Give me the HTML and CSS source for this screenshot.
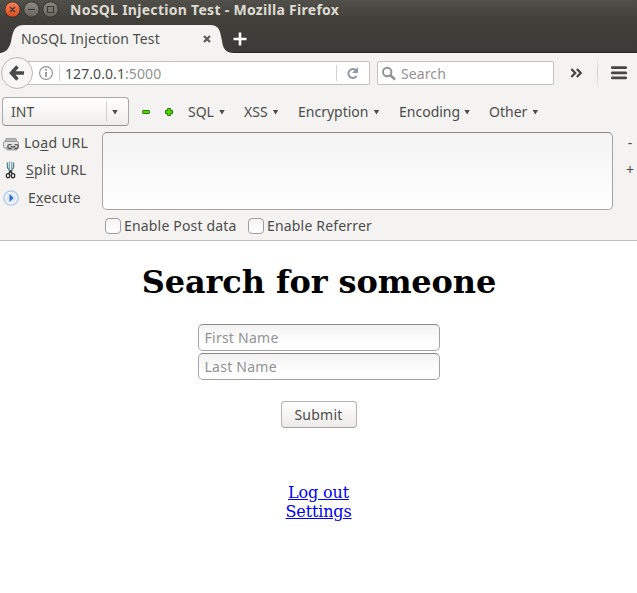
FILE: index.html
```html
<!DOCTYPE html>
<html lang="en">
<head>
<meta charset="utf-8">
<title>NoSQL Injection Test</title>
<link rel="stylesheet" href="styles.css">
</head>
<body>
<header class="titlebar">
  <svg class="window-buttons" width="64" height="20" viewBox="0 0 64 20">
    <defs>
      <linearGradient id="close" x1="0" y1="0" x2="0" y2="1"><stop offset="0" stop-color="#f58059"/><stop offset="1" stop-color="#df4b1b"/></linearGradient>
      <linearGradient id="grey" x1="0" y1="0" x2="0" y2="1"><stop offset="0" stop-color="#8d8b83"/><stop offset="1" stop-color="#65645d"/></linearGradient>
    </defs>
    <g stroke="#30302c"><circle cx="12.5" cy="9.5" r="7.7" fill="url(#close)"/><circle cx="31.5" cy="9.5" r="7.7" fill="url(#grey)"/><circle cx="50.5" cy="9.5" r="7.7" fill="url(#grey)"/></g>
    <g fill="none" stroke="#3a3935" stroke-width="1.2"><path d="M10 7l5 5M15 7l-5 5M28 9.5h7M47.5 6.5h6v6h-6z"/></g>
  </svg>
  <span class="window-title">NoSQL Injection Test - Mozilla Firefox</span>
</header>
<nav class="tabs">
  <div class="tab">
    <svg class="tab-shape" width="236" height="30" viewBox="0 0 236 30"><path d="M0 29C7 28 9 24 11 18C13 6 15 1 24 1H210C219 1 220 6 222 17C223 25 226 29 234 29V30H0Z" fill="#f4f3f1"/></svg>
    <span class="tab-title">NoSQL Injection Test</span>
    <svg class="tab-close" width="8" height="8" viewBox="0 0 8 8"><path d="M1 1l6 6M7 1L1 7" stroke="#5c5b58" stroke-width="2.2"/></svg>
  </div>
  <svg class="new-tab" width="14" height="14" viewBox="0 0 14 14"><path d="M7 .5v13M.5 7h13" stroke="#fff" stroke-width="2.6"/></svg>
</nav>
<div class="navbar">
  <svg class="back" width="34" height="34" viewBox="0 0 34 34"><circle cx="17" cy="17" r="15.5" fill="#f8f7f6" stroke="#bbb9b6"/><path d="M17.500 10.500L11.500 17l6 6.500M12 17h12" fill="none" stroke="#4b4b4b" stroke-width="3.500"/></svg>
  <div class="address">
    <svg width="16" height="16" viewBox="0 0 16 16"><circle cx="8" cy="8" r="6.4" fill="none" stroke="#8e8e8e" stroke-width="1.1"/><path d="M8 3.7v2M8 7v5" stroke="#8e8e8e" stroke-width="1.7"/></svg>
    <i class="rule"></i>
    <span class="url">127.0.0.1<span class="port">:5000</span></span>
    <i class="rule reload-rule"></i>
    <svg class="reload" width="13" height="13" viewBox="0 0 13 13"><path d="M10.5 9.2A4.5 4.5 0 1 1 9.7 3" fill="none" stroke="#8d99a6" stroke-width="2"/><path d="M12 0v6H6z" fill="#8d99a6"/></svg>
  </div>
  <div class="search">
    <svg width="16" height="16" viewBox="0 0 16 16"><circle cx="6.2" cy="6" r="4.2" fill="none" stroke="#929292" stroke-width="2"/><path d="M9.2 9l4.8 4.7" stroke="#929292" stroke-width="2.5"/></svg>
    <span>Search</span>
  </div>
  <svg class="overflow" width="13" height="10" viewBox="0 0 13 10"><path d="M1.3 1l4 4-4 4M6.8 1l4 4-4 4" fill="none" stroke="#404040" stroke-width="2.1"/></svg>
  <i class="menu-rule"></i>
  <svg class="menu" width="16" height="14" viewBox="0 0 16 14"><path d="M1.3 1.7h13.4M1.3 6.8h13.4M1.3 11.9h13.4" stroke="#464646" stroke-width="2.8" stroke-linecap="round"/></svg>
</div>
<section class="hackbar">
  <div class="tools">
    <div class="select"><span>INT</span><i class="select-rule"></i><i class="arrow"></i></div>
    <svg class="minus" width="10" height="10" viewBox="0 0 10 10"><rect x="1.5" y="3.5" width="7" height="3" rx=".7" fill="#53d900" stroke="#237600"/></svg>
    <svg class="plus" width="10" height="10" viewBox="0 0 10 10"><path d="M3.5 1.5h3v2h2v3h-2v2h-3v-2h-2v-3h2z" fill="#53d900" stroke="#237600" stroke-linejoin="round"/></svg>
    <span class="drop sql">SQL<i class="arrow"></i></span>
    <span class="drop xss">XSS<i class="arrow"></i></span>
    <span class="drop encryption">Encryption<i class="arrow"></i></span>
    <span class="drop encoding">Encoding<i class="arrow"></i></span>
    <span class="drop other">Other<i class="arrow"></i></span>
  </div>
  <div class="request">
    <div class="actions">
      <div class="action load">
        <svg width="18" height="18" viewBox="0 0 18 18"><path d="M4 3.500h10l1 4H3z" fill="#b8b8b8" stroke="#a6a6a6"/><rect x="1.500" y="6.500" width="15" height="6.500" rx="1.500" fill="#e4e4e4" stroke="#999"/><path d="M3 13.500h13l-1 2H5z" fill="#aaa"/><path d="M9.500 13.500H7.700a1.900 1.900 0 0 1 0-3.800h1.800M12.500 9.700h1.800a1.900 1.900 0 0 1 0 3.800h-1.800M8.800 11.600h4.400" fill="none" stroke="#555" stroke-width="1.300"/></svg>
        <span>Lo<u>a</u>d URL</span>
      </div>
      <div class="action split">
        <svg width="18" height="20" viewBox="0 0 18 20"><path d="M5.500 2.500v5l2.500 4M11.500 2.500v5l-2.500 4" fill="none" stroke="#4f8091" stroke-width="1.400"/><path d="M7.500 1.500v8M9.600 1.500v8" stroke="#86aab6" stroke-width="1.200"/><path d="M6.500 14l2-3 2 3" fill="none" stroke="#222" stroke-width="1.400"/><g fill="none" stroke="#2d2d2d" stroke-width="1.300"><ellipse cx="6" cy="15.700" rx="1.700" ry="2.100"/><ellipse cx="11" cy="15.700" rx="1.700" ry="2.100"/></g></svg>
        <span><u>S</u>plit URL</span>
      </div>
      <div class="action execute">
        <svg width="18" height="18" viewBox="0 0 18 18"><circle cx="9" cy="9" r="7.2" fill="#dbe8f8" stroke="#b3c9e6" stroke-width="1.3"/><circle cx="9" cy="9" r="5.500" fill="none" stroke="#fff"/><path d="M7.500 5l4 4-4 4z" fill="#286bc1"/></svg>
        <span>E<u>x</u>ecute</span>
      </div>
    </div>
    <textarea class="request-url" aria-label="Request URL"></textarea>
    <div class="resize"><span>-</span><span>+</span></div>
  </div>
  <div class="options">
    <label class="post"><i class="check"></i><span>Enable Post data</span></label>
    <label class="referrer"><i class="check"></i><span>Enable Referrer</span></label>
  </div>
</section>
<main>
  <h1>Search for someone</h1>
  <form>
    <input class="first" placeholder="First Name">
    <input class="last" placeholder="Last Name">
    <button type="button">Submit</button>
  </form>
  <div class="links"><a href="#">Log out</a><a href="#">Settings</a></div>
</main>
</body>
</html>
```
FILE: styles.css
```css
* { box-sizing: border-box; }
body { margin: 0; height: 593px; overflow: hidden; background: #fff; color: #4c4c4c; font: 14px/20px "Noto Sans", sans-serif; }
svg { display: block; flex: none; }
span { white-space: nowrap; }
.titlebar { height: 20px; display: flex; background: linear-gradient(#504f49, #403f3a); }
.window-title { margin-left: 6px; color: #dfdbd2; font-weight: 700; font-size: 14px; letter-spacing: .29px; }
.tabs { height: 33px; display: flex; background: linear-gradient(#403f3a, #3c3b37); border-bottom: 1px solid #292825; }
.tab { position: relative; width: 232px; height: 33px; display: flex; align-items: center; padding: 5px 0 0 21px; }
.tab-shape { position: absolute; left: 0; top: 4px; }
.tab-title, .tab-close { position: relative; }
.tab-title { width: 182px; letter-spacing: .13px; }
.new-tab { margin: 12px 0 0 1px; }
.navbar { height: 40px; display: flex; align-items: center; background: #f4f3f1; }
.back { position: relative; z-index: 1; }
.address { width: 354px; height: 24px; margin-left: -18px; padding-left: 21px; display: flex; align-items: center; border: 1px solid #c4c2bf; border-radius: 2px; background: #fff; }
.rule { width: 1px; height: 16px; margin-left: 5px; background: #d2d2d2; }
.url { margin-left: 5px; width: 271px; padding-top: 1px; letter-spacing: .08px; }
.port { color: #929292; }
.reload-rule { margin-left: 0; }
.reload { margin-left: 9px; }
.search { width: 177px; height: 24px; margin-left: 7px; padding: 1px 0 0 3px; display: flex; align-items: center; gap: 4px; border: 1px solid #c4c2bf; border-radius: 2px; background: #fff; color: #929292; letter-spacing: .1px; }
.overflow { margin-left: 16px; }
.menu-rule { width: 1px; height: 34px; margin-left: 14px; background: linear-gradient(#f4f3f1, #cccac7, #f4f3f1); }
.menu { margin-left: 13px; }
.hackbar { height: 148px; padding: 4px 0 0 2px; background: #f4f3f1; border-bottom: 1px solid #c1bfbc; }
.tools { height: 29px; display: flex; align-items: center; }
.select { width: 127px; height: 29px; padding-left: 8px; display: flex; align-items: center; border: 1px solid #aaa8a5; border-bottom-color: #949290; border-radius: 4px; background: linear-gradient(#fff, #efedeb); }
.select > span { width: 95px; }
.select-rule { width: 1px; height: 19px; background: #d1cfcd; }
.arrow { flex: none; width: 6px; height: 5px; margin: 1px 0 0 5px; background: #4c4c4c; clip-path: polygon(0 0, 100% 0, 50% 100%); }
.minus { margin-left: 12px; }
.plus { margin-left: 13px; }
.drop { display: flex; align-items: center; }
.sql { width: 56px; margin-left: 14px; }
.xss { width: 54px; }
.encryption { width: 101px; }
.encoding { width: 90px; }
.encoding .arrow { margin-left: 4px; }
.request { height: 84px; display: flex; }
.actions { width: 100px; padding-top: 3px; letter-spacing: .24px; }
.action { height: 27.5px; display: flex; align-items: center; }
.load svg { margin-top: 2px; }
.load span { margin-left: 4px; }
.split span { margin-left: 6px; }
.execute span { margin-left: 8px; }
u { text-underline-offset: 2px; text-decoration-thickness: 1px; }
.request-url { width: 511px; height: 78px; margin-top: 6px; border: 1px solid #a5a4a2; border-top-color: #898886; border-radius: 5px; background: linear-gradient(#f3f3f3, #fff); resize: none; }
.resize { width: 12px; margin-left: 11px; padding-top: 7px; text-align: center; font-size: 14px; display: grid; grid-template-rows: 27px 27px; align-content: start; }
.options { height: 31px; display: flex; align-items: center; padding-left: 103px; letter-spacing: .18px; }
.options span { padding-top: 1px; }
.options label { display: flex; align-items: center; }
.check { width: 16px; height: 16px; margin-right: 3px; border: 1px solid #a09e9c; border-radius: 4px; background: linear-gradient(#f5f5f5, #fff); }
.post { width: 143px; }
main { padding: 0 8px; text-align: center; font-family: "DejaVu Serif", serif; }
h1 { margin: 22px 0 23px; padding-left: 1px; color: #000; font: bold 32px/38px "DejaVu Serif", serif; letter-spacing: -.12px; }
form { display: flex; flex-direction: column; align-items: center; }
input, button { font: 14px/20px "Noto Sans", sans-serif; color: #4c4c4c; letter-spacing: .25px; }
input { width: 242px; height: 27px; margin: 0 0 2px; padding: 0 6px; border: 1px solid #a4a3a1; border-top-color: #898886; border-radius: 5px; background: linear-gradient(#f2f2f2, #fff 70%); }
input::placeholder { color: #929292; opacity: 1; }
button { width: 76px; height: 27px; margin-top: 19px; padding: 0; border: 1px solid #b4b2b0; border-bottom-color: #a3a19f; border-radius: 4px; background: linear-gradient(#fff, #edebe9); }
.links { display: flex; flex-direction: column; align-items: center; margin-top: 55px; font-size: 16px; line-height: 19px; letter-spacing: -.15px; }
a { color: #00e; text-underline-offset: 1px; }
```
